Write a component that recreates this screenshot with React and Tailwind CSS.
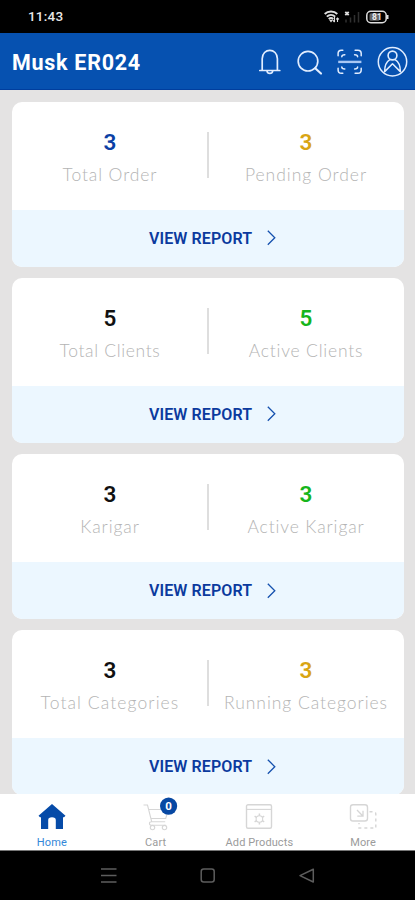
const cards = [
  { left: ["3", "Total Order", "text-[#0b3fa5]", "tracking-[0.9px]"], right: ["3", "Pending Order", "text-[#d9a514]", "tracking-[0.98px]"] },
  { left: ["5", "Total Clients", "text-[#111111]", "tracking-[0.65px]"], right: ["5", "Active Clients", "text-[#16b51b]", "tracking-[0.8px]"] },
  { left: ["3", "Karigar", "text-[#111111]", "tracking-[0.9px]"], right: ["3", "Active Karigar", "text-[#16b51b]", "tracking-[0.87px]"] },
  { left: ["3", "Total Categories", "text-[#111111]", "tracking-[1.1px]"], right: ["3", "Running Categories", "text-[#d9a514]", "tracking-[0.95px]"] },
];

function Stat({ data: [value, label, color, tracking] }) {
  return (
    <div className="flex w-[196px] flex-col items-center pt-[27px]">
      <span className={`font-[Roboto,sans-serif] text-[22.5px] font-semibold leading-[26px] ${color}`}>{value}</span>
      <span className={`mt-[9px] whitespace-nowrap font-[Lato,sans-serif] text-[17.5px] font-light leading-[22px] text-[#b4b4b4] ${tracking}`}>{label}</span>
    </div>
  );
}

function Card({ card }) {
  return (
    <section className="h-[165px] shrink-0 overflow-hidden rounded-[10px] bg-white">
      <div className="flex h-[108px]">
        <Stat data={card.left} />
        <div className="-mx-px mt-[30px] h-[46px] w-[2px] bg-[#dedede]" />
        <Stat data={card.right} />
      </div>
      <div className="flex h-[57px] items-center bg-[#ecf7ff] pl-[137px] text-[#0b3a9e]">
        <span className="w-[103px] whitespace-nowrap pt-px font-[Roboto,sans-serif] text-[16px] font-semibold tracking-[0.1px]">VIEW REPORT</span>
        <svg className="ml-[15px]" width="9" height="16" viewBox="0 0 9 16" fill="none" stroke="#1551ae" strokeWidth="1.3"><path d="M.8 .7 7.8 7.7 .8 14.7" /></svg>
      </div>
    </section>
  );
}

function StatusBar() {
  return (
    <div className="flex h-[33px] items-center bg-black pl-7 text-[#e8e8e8]">
      <span className="w-[296px] font-[Roboto,sans-serif] text-[13.5px] font-medium leading-none tracking-[0.2px]">11:43</span>
      <svg width="66" height="14" viewBox="0 0 66 14" fill="none">
        <g stroke="#dedede" strokeWidth="1.9">
          <path d="M.7 4C4 .7 10 .7 13.3 4M2.8 6.6c2.5-2.3 5.9-2.3 8.4 0M4.7 9c1.3-1.1 3.3-1.1 4.6 0" />
          <path d="M10.5 7v5m-1.7-1.8 1.7 2 M13.5 12V8m-1.3 1.4L13.5 8l1.4 1.4" strokeWidth="1.1" />
        </g>
        <path d="M7 12.5 5 9.8h4Z" fill="#dedede" />
        <path d="m21.3 1.8 3.4 3.4m0-3.4-3.4 3.4" stroke="#ddd" strokeWidth="1.9" />
        <path d="M22 9.5v3M26.5 7.5v5M30.5 5v7.5M34.5 2v10.5" stroke="#303030" strokeWidth="1.5" />
        <rect x="42.8" y="1.3" width="19.4" height="11.4" rx="4" stroke="#dedede" strokeWidth="1.5" />
        <path d="M63.5 5v4" stroke="#dedede" strokeWidth="2" />
        <rect x="45.5" y="3.3" width="10" height="7.4" rx="1.5" fill="#666" />
        <text x="48" y="10.2" fontFamily="Roboto" fontSize="8.5" fontWeight="700" fill="#eee">81</text>
      </svg>
    </div>
  );
}

function Header() {
  return (
    <header className="flex h-[57px] items-center border-b border-[#003e9e] bg-[#0651b0] pl-3">
      <h1 className="w-[245px] pt-[4px] font-[Roboto,sans-serif] text-[21.5px] font-bold leading-none tracking-[0.72px] text-white">Musk ER024</h1>
      <svg width="152" height="32" viewBox="0 0 152 32" fill="none" stroke="#e1edff" strokeWidth="1.7" strokeLinecap="round" strokeLinejoin="round">
        <path d="M2.8 25.5h20M5.2 25.5V13.8c0-11.2 15.2-11.2 15.2 0v11.7M10 26.2c.5 3 5.2 3 5.7 0" />
        <circle cx="51" cy="16.2" r="9.8" /><path d="m58.2 23.3 5.8 5.2" strokeWidth="2.2" />
        <g strokeWidth="1.5" transform="translate(-.5 .5)">
          <path d="M86.3 4.8h-1.4q-3.3 0-3.3 3.3v2.2M88.3 9.3q-3 0-3 2M98.6 4.8h2.8q3.3 0 3.3 3.3v2.2M98.1 9.3q3 0 3 2M81.6 22.8v1.6q0 3.3 3.3 3.3h1.4M85.3 21.6q0 2 3 2M104.7 22.8v1.6q0 3.3-3.3 3.3h-2.8M101.1 21.6q0 2-3 2" />
          <path d="M81.7 16.4h23.2" strokeWidth="2.4" stroke="#a9c7f4" strokeLinecap="butt" />
        </g>
        <circle cx="135.5" cy="16.7" r="14.2" strokeWidth="1.5" />
        <circle cx="135.5" cy="10.5" r="4.4" strokeWidth="1.6" />
        <path d="M127.6 26.8c0-5.5 2-10.3 5.3-12.2M143.4 26.8c0-5.5-2-10.3-5.3-12.2M128.2 26.1l7.3-7.4 7.3 7.4" strokeWidth="1.5" />
      </svg>
    </header>
  );
}

function NavItem({ label, active, children }) {
  return (
    <div className="flex w-[103.75px] flex-col items-center pt-2">
      <svg className="overflow-visible" width="30" height="30" viewBox="0 0 30 30" fill="none" stroke="#d6d6d6" strokeWidth="1.1">{children}</svg>
      <span className={`mt-[4px] whitespace-nowrap font-[Roboto,sans-serif] text-[11px] leading-[14px] tracking-[0.1px] ${active ? "text-[#3387d8]" : "text-[#9b9b9b]"}`}>{label}</span>
    </div>
  );
}

export default function App() {
  return (
    <div className="flex h-[900px] w-[415px] flex-col overflow-hidden bg-[#e4e3e3]">
      <StatusBar />
      <Header />
      <main className="flex h-[704px] flex-col gap-[11.2px] overflow-hidden pl-3 pr-[11px] pt-[11.7px]">
        {cards.map((card) => <Card key={card.left[1]} card={card} />)}
      </main>
      <nav className="flex h-[57px] shrink-0 border-b border-[#777] bg-white">
        <NavItem label="Home" active>
          <path d="M15 2 28.5 13.8 27 15.3h-1V27h-7.2v-9q0-2.8-3.8-2.8T11.2 18v9H4V15.3H3l-1.5-1.5Z" fill="#064ba8" stroke="none" />
        </NavItem>
        <NavItem label="Cart">
          <path d="M2.5 3h4l4.2 16.7h13.5M7.4 7.5h20.1l-2.8 9H9.8M10.7 19.7c-3 0-3 3.5 0 3.5h14.2" />
          <circle cx="11.5" cy="25.6" r="2.2" /><circle cx="23.5" cy="25.6" r="2.2" />
          <circle cx="27.6" cy="4.1" r="8.6" fill="#0748a3" stroke="none" />
          <text x="27.6" y="8" textAnchor="middle" fontFamily="Roboto" fontWeight="700" fontSize="11.5" fill="white" stroke="none">0</text>
        </NavItem>
        <NavItem label="Add Products">
          <rect x="2.5" y="2.8" width="25" height="23.4" rx="1.5" strokeWidth="1.4" /><path d="M2.5 7.4h25" />
          <circle cx="15.4" cy="17" r="3.3" />
          <path d="M15.4 11.5v2.2M15.4 20.3v2.2M10.6 14.2l1.9 1.1M18.3 18.7l1.9 1.1M10.6 19.8l1.9-1.1M18.3 15.3l1.9-1.1" strokeWidth="1.5" />
        </NavItem>
        <NavItem label="More">
          <rect x="2.5" y="2.7" width="17" height="16.3" rx="2.5" strokeWidth="1.4" />
          <path d="m9 8 5.8 6M15 8.8v5.4H9.3" strokeWidth="1.3" />
          <path d="M21.5 9.8h4q2.3 0 2.3 2.3V26H11v-5" strokeDasharray="3 3" strokeWidth="1.4" />
        </NavItem>
      </nav>
      <div className="flex h-[49px] shrink-0 items-center bg-black pl-[101px]">
        <svg width="214" height="18" viewBox="0 0 214 18" fill="none" stroke="#5d5d5d" strokeWidth="1.5">
          <path d="M0 2h15.5M0 8.5h15.5M0 15h15.5" />
          <rect x="100.2" y="2" width="13" height="13" rx="2.5" />
          <path d="M199 8.6 212.3 2.2V15Z" strokeLinejoin="round" />
        </svg>
      </div>
    </div>
  );
}
